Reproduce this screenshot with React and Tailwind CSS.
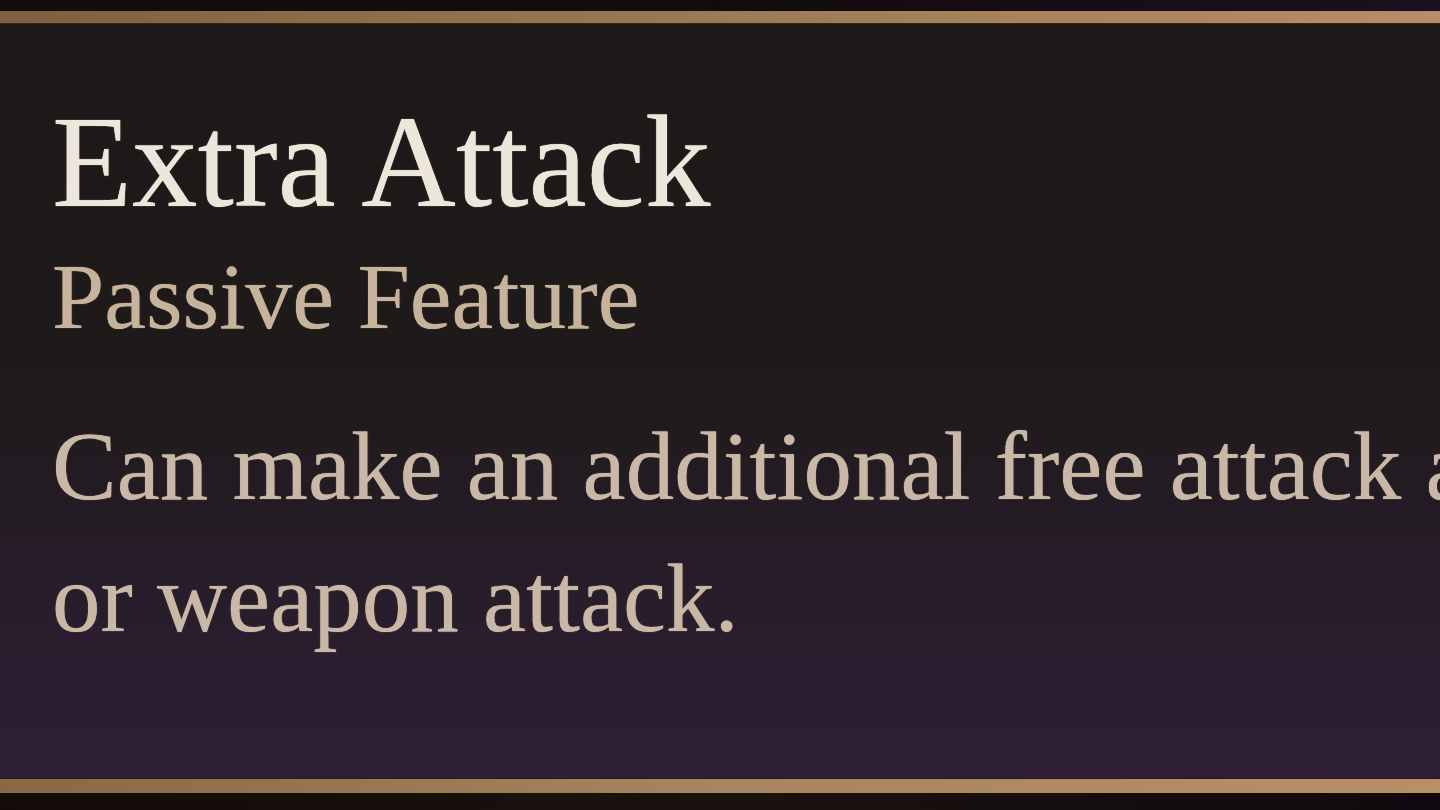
export default function App() {
  return (
    <div className="w-[1440px] h-[810px] flex flex-col overflow-hidden bg-[#120c0a]" style={{ fontFamily: '"Liberation Serif", "Times New Roman", serif' }}>
      <div className="h-[11px] shrink-0 bg-gradient-to-r from-[#140d0a] via-[#120b0c] to-[#1a1020]" />
      <div className="h-[13px] shrink-0 bg-gradient-to-r from-[#7f5f3f] via-[#9c7a55] to-[#b68d68] border-b border-[#3a2414]" />
      <div className="flex-1 overflow-hidden bg-[linear-gradient(to_bottom,#1c1918_0%,#1e1a1a_45%,#251c26_68%,#2b1e30_85%,#2e1f34_100%)]">
        <div className="pl-[52px] pt-[72px] whitespace-nowrap">
          <div className="text-[131px] leading-[131px] text-[#ede7db] [text-shadow:0_0_1px_#ede7db]">Extra Attack</div>
          <div className="mt-[22px] text-[94px] leading-[94px] text-[#c7b39c] [text-shadow:0_0_1px_#c7b39c]">Passive Feature</div>
          <div className="mt-[58px] text-[97px] leading-[132px] text-[#cab8a7] [text-shadow:0_0_1px_#cab8a7]">
            Can make an additional free attack after making an unarmed
            <br />
            or weapon attack.
          </div>
        </div>
      </div>
      <div className="h-[15px] shrink-0 bg-gradient-to-r from-[#8a6843] via-[#a98460] to-[#b88f69] border-t border-[#2a1a14]" />
      <div className="h-[17px] shrink-0 bg-gradient-to-r from-[#120b08] via-[#1a120e] to-[#100a10]" />
    </div>
  );
}
